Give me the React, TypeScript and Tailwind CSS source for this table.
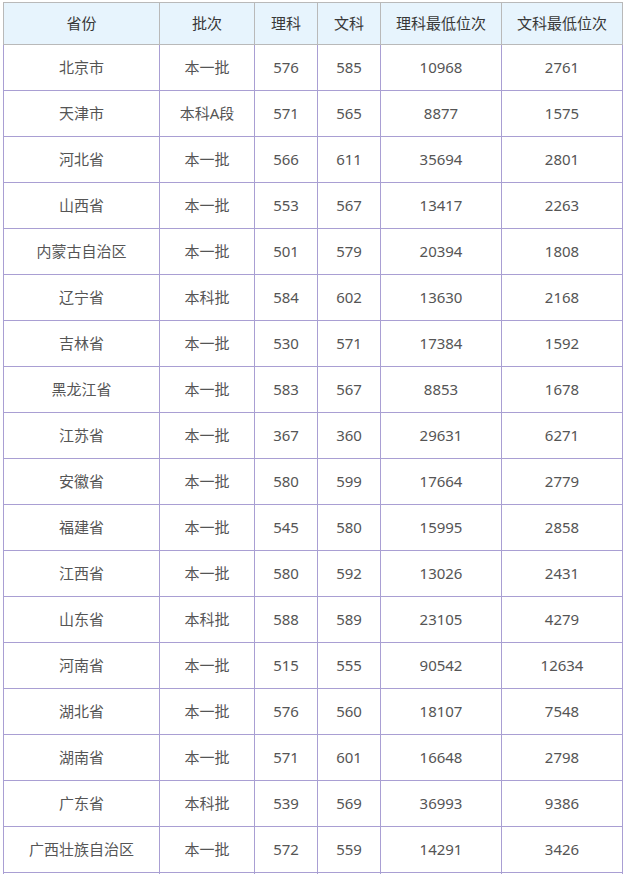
import React from "react";

const rows: string[][] = [
  ["北京市", "本一批", "576", "585", "10968", "2761"],
  ["天津市", "本科A段", "571", "565", "8877", "1575"],
  ["河北省", "本一批", "566", "611", "35694", "2801"],
  ["山西省", "本一批", "553", "567", "13417", "2263"],
  ["内蒙古自治区", "本一批", "501", "579", "20394", "1808"],
  ["辽宁省", "本科批", "584", "602", "13630", "2168"],
  ["吉林省", "本一批", "530", "571", "17384", "1592"],
  ["黑龙江省", "本一批", "583", "567", "8853", "1678"],
  ["江苏省", "本一批", "367", "360", "29631", "6271"],
  ["安徽省", "本一批", "580", "599", "17664", "2779"],
  ["福建省", "本一批", "545", "580", "15995", "2858"],
  ["江西省", "本一批", "580", "592", "13026", "2431"],
  ["山东省", "本科批", "588", "589", "23105", "4279"],
  ["河南省", "本一批", "515", "555", "90542", "12634"],
  ["湖北省", "本一批", "576", "560", "18107", "7548"],
  ["湖南省", "本一批", "571", "601", "16648", "2798"],
  ["广东省", "本科批", "539", "569", "36993", "9386"],
  ["广西壮族自治区", "本一批", "572", "559", "14291", "3426"],
];

const headers = ["省份", "批次", "理科", "文科", "理科最低位次", "文科最低位次"];

export default function App() {
  return (
    <div
      className="w-[625px] h-[874px] overflow-hidden bg-white pl-[3px] pt-[2px]"
      style={{ fontFamily: '"Noto Sans", "Noto Sans CJK SC", sans-serif' }}
    >
      <table className="table-fixed border-collapse w-[620px]">
        <colgroup>
          <col className="w-[156px]" />
          <col className="w-[95px]" />
          <col className="w-[63px]" />
          <col className="w-[63px]" />
          <col className="w-[121px]" />
          <col className="w-[121px]" />
        </colgroup>
        <thead>
          <tr>
            {headers.map((h) => (
              <th
                key={h}
                className="h-[42px] p-0 border border-[#b9b9b9] bg-[#e7f4fd] text-[15px] font-normal text-[#383838] text-center align-middle"
              >
                {h}
              </th>
            ))}
          </tr>
        </thead>
        <tbody>
          {rows.map((r, i) => (
            <tr key={i}>
              {r.map((c, j) => (
                <td
                  key={j}
                  className="h-[46px] p-0 border border-[#a99fd3] text-[15px] text-[#555555] text-center align-middle"
                >
                  {c}
                </td>
              ))}
            </tr>
          ))}
          <tr>
            {headers.map((h) => (
              <td key={h} className="h-[46px] p-0 border border-[#a99fd3]">
                &nbsp;
              </td>
            ))}
          </tr>
        </tbody>
      </table>
    </div>
  );
}
